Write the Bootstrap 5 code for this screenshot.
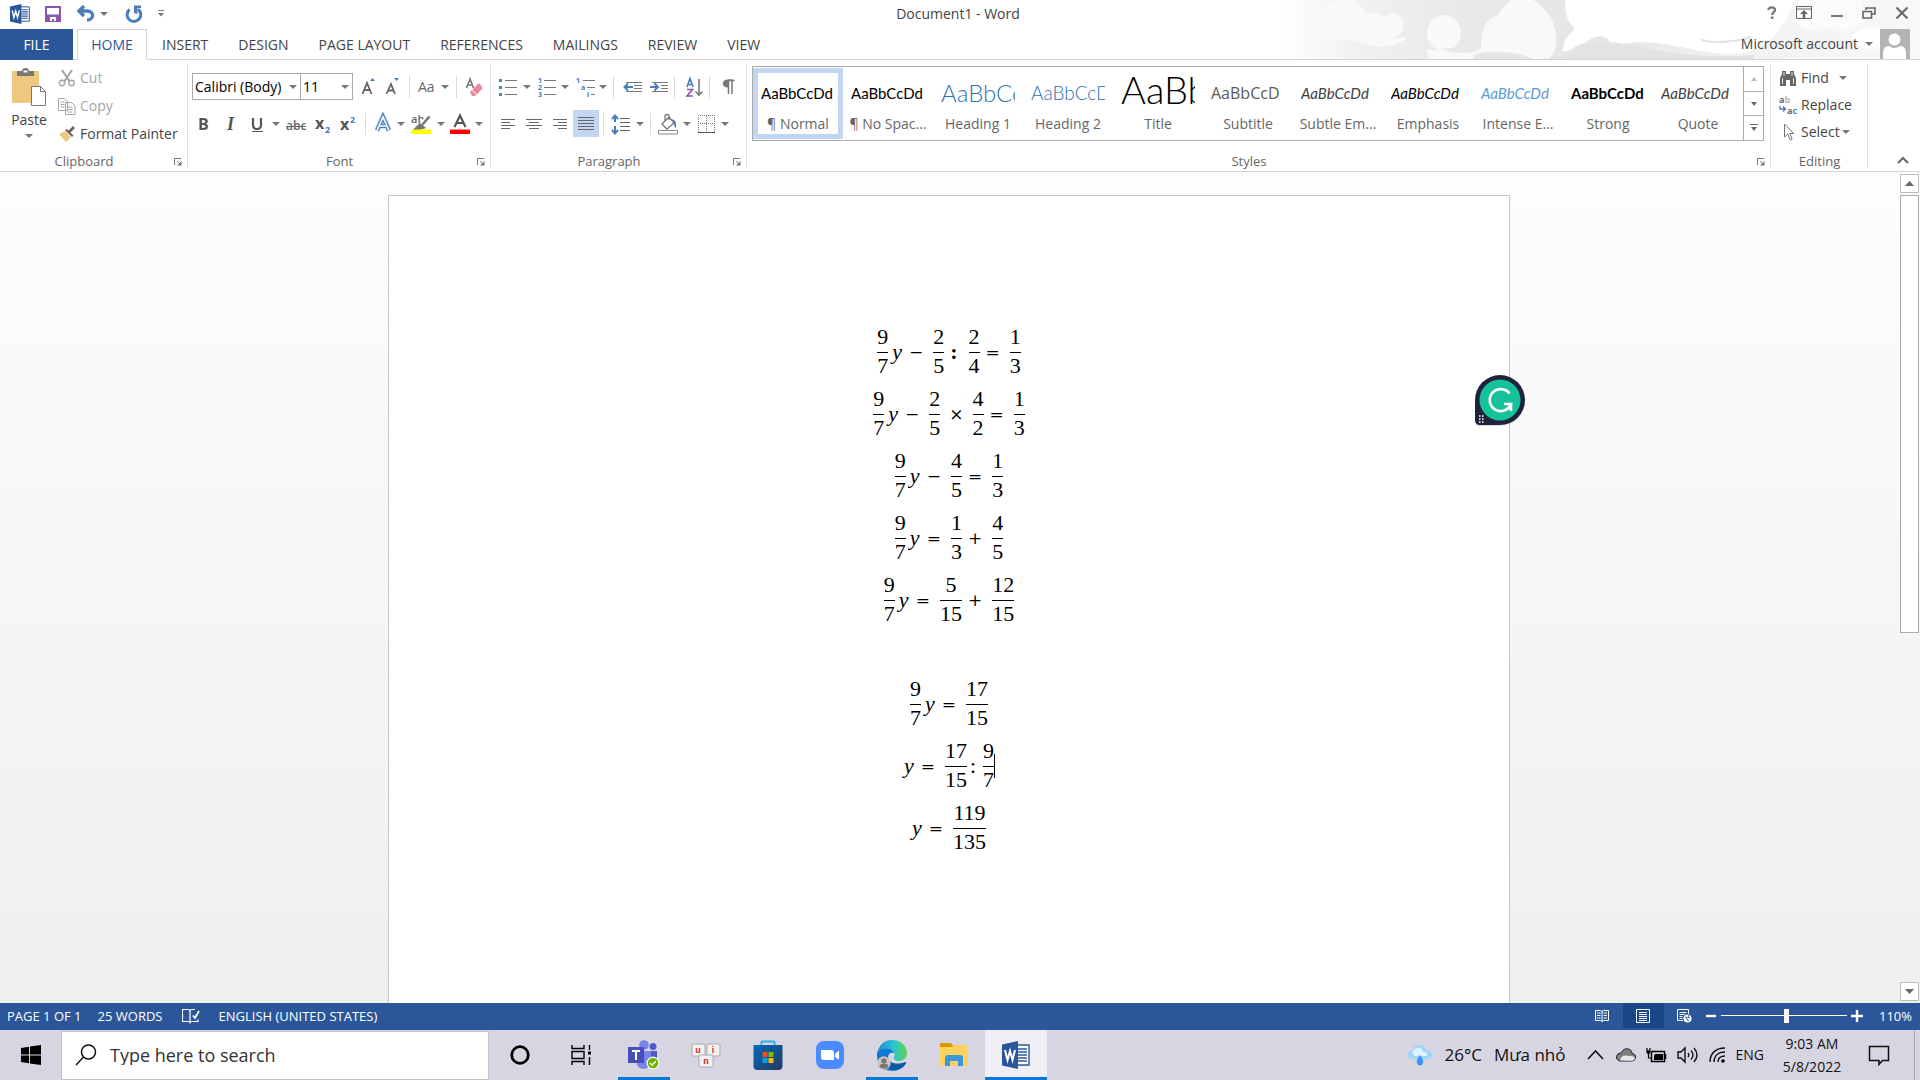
<!DOCTYPE html>
<html lang="en">
<head>
<meta charset="utf-8">
<meta name="viewport" content="width=device-width, initial-scale=1">
<title>Document1 - Word</title>
<link href="https://cdn.jsdelivr.net/npm/bootstrap@5.3.0/dist/css/bootstrap.min.css" rel="stylesheet">
<style>
:root{--word:#2b579a;--line:#d4d4d4;--ink:#444;--sel:#c2d5f2;--blue:#4a7ebb}
body{font-family:"Open Sans","Noto Sans",sans-serif;font-size:14px;line-height:20px;color:var(--ink);background:#fff;min-width:1280px}
svg{display:block;flex:none}
button{font:inherit;color:inherit;background:none;border:0;padding:0}
.caret{width:12px;flex:none;display:flex;justify-content:center}
.caret::before{content:"";border:4px solid transparent;border-top-color:#777;border-bottom:0}
/* title and tabs */
.app-head{height:60px;border-bottom:1px solid var(--line)}
.sky{right:0;top:0;width:640px;height:59px}
.quick{height:27px;padding-left:10px}
.quick .gapa{width:15px}
.doc-title{left:0;right:4px;top:4px;text-align:center}
.win-btns{height:26px;gap:18px;padding-right:10px}
.rtabs{height:31px;margin-bottom:-1px}
.rtab{height:31px;padding:0 14px;color:var(--ink);text-decoration:none;display:flex;align-items:center;border:1px solid transparent}
.rtab.file-tab{background:var(--word);color:#fff;width:73px;justify-content:center;margin-right:4px}
.rtab.on{background:#fff;color:var(--word);border-color:var(--line);border-bottom-color:#fff;width:70px;justify-content:center;padding:0}
.account{height:30px;padding-right:10px;gap:5px}
/* ribbon */
.ribbon{height:112px;border-bottom:1px solid var(--line)}
.rgroup{position:relative;flex:none}
.rgroup::after{content:"";position:absolute;right:0;top:4px;bottom:4px;width:1px;background:#e0e0e0}
.rgroup>.gname{position:absolute;left:0;right:0;bottom:0;height:20px;font-size:13px;line-height:20px;text-align:center;color:#666}
.launch{position:absolute;right:6px;bottom:5px}
.g-clip{width:188px}.g-clip .gname{right:20px}
.g-font{width:303px;padding:13px 0 0 4px}.g-font .gname{right:100px;left:100px}
.g-para{width:256px;padding:13px 0 0 4px}.g-para .gname,.g-styles .gname{right:20px}
.g-styles{min-width:0}
.g-edit{width:97px}
.g-end{width:55px}
.trow{height:27px;margin-bottom:10px}
.tbtn{display:flex;align-items:center;height:27px}
.tbtn.on{background:var(--sel)}
.tsep{width:1px;height:22px;background:#dcdcdc;margin:0 4px;flex:none}
.g-font .tsep{margin:0 5px}
.combo{position:relative;height:27px;border:1px solid #ababab;display:flex;align-items:center;background:#fff}
.combo select{appearance:none;border:0;background:none;padding:0 13px 0 2px;width:100%;color:#000;font-size:14px;line-height:20px;outline:0}
.combo .caret{position:absolute;right:1px}
.combo.face{width:109px}.combo.size{width:53px;margin:0 3px 0 -1px}
.paste{width:58px;padding-top:8px}
.cmd{height:28px;gap:4px}
.g-edit .cmd{height:27px}
.off{color:#a6a6a6}
.gallery{margin:6px 7px 0 5px;height:75px;border:1px solid #ababab}
.stitem{width:90px;height:71px;margin-top:1px;border:5px solid transparent;text-align:center;flex:none;overflow:hidden;padding:3px}
.stitem.on{border-color:var(--sel)}
.samp{display:block;height:30px;line-height:34px;overflow:hidden;white-space:nowrap;text-align:left;font-family:Lato,sans-serif;font-size:15px;color:#000}
.slab{display:block;color:#666;white-space:nowrap;margin:9px -6px 0;line-height:18px}
.h1s{font-weight:300;font-size:24px;color:#2e74b5}
.h2s{font-weight:300;font-size:19px;color:#2e74b5}
.tis{font-weight:300;font-size:38px;line-height:26px}
.sus{font-family:"Open Sans",sans-serif;font-size:16px;color:#5a5a5a}
.grey{color:#404040}
.azure{color:#5b9bd5}
.scrollcol{width:20px;border-left:1px solid #ababab}
.scrollcol button{flex:1;display:flex;align-items:center;justify-content:center}
.scrollcol button+button{border-top:1px solid #ababab}
/* document */
.canvas{background:linear-gradient(#fdfdfd,#efefef)}
.sheet{width:1122px;margin:23px 388px 0;border:1px solid #c6c6c6;border-bottom:0;background:#fff;padding-top:125px;flex:none}
.eq{height:62px;display:flex;align-items:center;justify-content:center;font-family:"Liberation Serif",serif;font-size:22px;line-height:28px;color:#000}
.eq.after{margin-top:42px}
.frac{display:flex;flex-direction:column;text-align:center;position:relative}
.frac>span:not(.cursor){line-height:25px;padding-bottom:3px}
.frac>span:first-child{border-bottom:1px solid #000}
.eq i{margin:0 1px 0 4px}
.eq b{margin:0 11px 0 6px}
.op,.times{font-family:"DejaVu Serif",serif;font-size:17px;margin:0 10px 0 6px}
.times{margin:0 9px}
.rat{margin:0 7px 0 3px}
.cursor{position:absolute;right:-1px;top:16px;height:24px;width:1px;background:#000}
.vscroll{width:20px;padding:2px 1px 2px 0}
.vscroll .sb{height:19px;border:1px solid #bcbcbc;background:#fff;display:flex;align-items:center;justify-content:center}
.vscroll .thumb{height:438px;border:1px solid #ababab;background:#fff;margin-top:2px}
.grammar{left:1470px;top:198px}
/* status */
.status{height:27px;background:var(--word);color:#fff;font-size:13px;line-height:18px;padding:0 8px 2px 7px}
.proof{margin:0 19px}
.viewbtn{width:41px;height:25px;display:flex;align-items:center;justify-content:center}
.viewbtn.on{background:#19478a}
.zoomer{appearance:none;width:126px;height:16px;background:linear-gradient(#fff,#fff) center/100% 1px no-repeat;margin:0 4px}
.zoomer::-webkit-slider-thumb{appearance:none;width:5px;height:14px;background:#fff}
/* taskbar */
.taskbar{height:50px;background:#d6d5e1;color:#111}
.start{width:61px;height:50px;display:flex;align-items:center;justify-content:center}
.find{width:428px;height:49px;background:#fff;border:1px solid #c4c4c8;padding-left:13px;gap:13px}
.find input{border:0;outline:0;font-size:18px;color:#333;background:none;width:300px;padding:0}
.find input::placeholder{color:#333;opacity:1}
.app{width:62px;height:50px;display:flex;align-items:center;justify-content:center;position:relative}
.app.run::after{content:"";position:absolute;left:5px;right:5px;bottom:0;height:3px;background:#0a78d7}
.app.now{background:#efeef4}.app.now::after{left:0;right:0}
.tray{gap:10px}
.weather{font-size:17px;gap:12px}
.clock{line-height:23px;text-align:center;width:60px}
.peek{width:6px;height:50px;border-left:1px solid #a9a9b2;margin-left:14px}
</style>
<script src="https://cdn.jsdelivr.net/npm/bootstrap@5.3.0/dist/js/bootstrap.bundle.min.js"></script>
</head>
<body class="d-flex flex-column vh-100 overflow-hidden">
<svg width="0" height="0" class="position-absolute" aria-hidden="true">
<defs>
<symbol id="word" viewBox="0 0 28 28"><path d="M14 4h13v20H14z" fill="#fff" stroke="#2b579a" stroke-width="1.4"/><path d="M16 8h9M16 11h9M16 14h9M16 17h9M16 20h9" stroke="#2b579a" stroke-width="1.5"/><path d="M0 3.500 16 0v28L0 24.500z" fill="#2b579a"/><path d="M3 9l2.500 10L8 10l2.500 9L13 9" fill="none" stroke="#fff" stroke-width="2"/></symbol>
<symbol id="launcher" viewBox="0 0 8 8"><path d="M.5 7V.5H7M3 3l3 3" fill="none" stroke="#777"/><path d="M7.500 3v4.500H3z" fill="#777"/></symbol>
</defs>
</svg>

<header class="app-head position-relative flex-shrink-0">
  <svg class="sky position-absolute" viewBox="0 0 640 59" preserveAspectRatio="none" aria-hidden="true">
    <defs><linearGradient id="fade"><stop offset="0" stop-color="#fff"/><stop offset=".12" stop-color="#f1f1f1"/><stop offset=".3" stop-color="#e8e8e8"/><stop offset=".5" stop-color="#e6e6e6"/><stop offset=".72" stop-color="#f2f2f2"/><stop offset="1" stop-color="#f8f8f8"/></linearGradient></defs>
    <path d="M0 0h640v59H0z" fill="url(#fade)"/>
    <g transform="translate(-42 0)"><g fill="#f9f9f9"><path d="M82 40c-7-20 5-41 23-41 15 0 20 9 23 16 7-4 14-2 17 3 8-8 22-5 20 8 0 8-7 12-12 12 8 1 14-2 16 0-9 8-27 11-43 6-16-6-28-5-44-4z"/><ellipse cx="206" cy="33" rx="17" ry="18"/><path d="M188 49c20 2 40 8 55 0 0-19 5-32 16-33 15-25 31-25 48-6 16 18 14 44 2 49H190z"/></g>
    <path d="M201 48q15 5 30 1M236 55q12-5 24-3 20 0 36 7h-60z" fill="#e6e6e6"/></g>
    <path d="M285 0h230c-10 25-20 37-32 45q-20 14-68 5-52-13-82-4c-8-15-20-10-28-3-10 5-20 10-22 8 0-12 6-16 12-22-10-11-9-15-10-29z" fill="#fff"/>
    <path d="M287 59c3-24 48-18 74-12q52 12 113 8v4z" fill="#e3e3e3"/>
    <path d="M421 40q22 5 50-3" fill="none" stroke="#e2e2e2" stroke-width="2"/>
    <path d="M515 0h65c10 18-1 30-17 31-10-2-19-6-26-1-24 2-24-14-22-30z" fill="#fbfbfb"/>
    <ellipse cx="592" cy="38" rx="19" ry="11" fill="#fff"/>
  </svg>
  <div class="doc-title position-absolute">Document1 - Word</div>
  <div class="d-flex justify-content-between position-relative">
    <div class="quick d-flex align-items-center">
      <svg width="20" height="20"><use href="#word"/></svg><span class="gapa"></span>
      <button aria-label="Save"><svg width="16" height="16"><path d="M1 1h14v14H1z" fill="#fff" stroke="#8a57ad" stroke-width="2"/><path d="M2 8.500h12V15H2z" fill="#8a57ad"/><path d="M5 11h6v4H9v-2H7v2H5z" fill="#fff"/></svg></button><span class="gapa"></span>
      <button class="d-flex align-items-center" aria-label="Undo"><svg width="22" height="18"><path d="M3 6h8c8 0 7 9 0 9" fill="none" stroke="#4a7ebb" stroke-width="3.400"/><path d="M8 1 3 6l5 5" fill="none" stroke="#4a7ebb" stroke-width="3.400"/></svg><span class="caret"></span></button><span class="gapa"></span>
      <button aria-label="Repeat"><svg width="18" height="18"><path d="M4.500 4.500A6.800 6.800 0 1 0 13 4.200" fill="none" stroke="#4a7ebb" stroke-width="3"/><path d="M9 .5h7V3h-3.500v6L9 8z" fill="#4a7ebb"/></svg></button><span class="gapa"></span>
      <button aria-label="Customize"><svg width="6" height="8"><path d="M0 .5h6" stroke="#777"/><path d="M0 3h6L3 6.500z" fill="#777"/></svg></button>
    </div>
    <div class="win-btns d-flex align-items-center">
      <button aria-label="Help"><svg width="12" height="16"><path d="M2.500 5C2.500 1 9.500 2 9 5 9 7 6.300 7 6.200 10M6.200 11.500v2.500" fill="none" stroke="#777" stroke-width="2.400"/></svg></button>
      <button aria-label="Ribbon display"><svg width="16" height="14"><path d="M.5.500h15v12H.5zM1 3h14" fill="none" stroke="#666"/><path d="M8 4l4 4H9.200v4H6.800V8H4z" fill="#666"/></svg></button>
      <button aria-label="Minimize"><svg width="14" height="14"><path d="M1 10h12" stroke="#777" stroke-width="2"/></svg></button>
      <button aria-label="Restore"><svg width="14" height="14"><path d="M4 4V2h9v6h-3" fill="none" stroke="#666" stroke-width="1.600"/><path d="M1 5.500h8.500v6.500H1z" fill="none" stroke="#666" stroke-width="1.600"/></svg></button>
      <button aria-label="Close"><svg width="16" height="14"><path d="M2.500 1.500l11 11M13.500 1.500l-11 11" stroke="#666" stroke-width="2"/></svg></button>
    </div>
  </div>
  <div class="d-flex justify-content-between position-absolute bottom-0 start-0 end-0">
    <nav class="rtabs d-flex">
      <a class="rtab file-tab" href="#">FILE</a><a class="rtab on" href="#">HOME</a><a class="rtab" href="#">INSERT</a><a class="rtab" href="#">DESIGN</a><a class="rtab" href="#">PAGE LAYOUT</a><a class="rtab" href="#">REFERENCES</a><a class="rtab" href="#">MAILINGS</a><a class="rtab" href="#">REVIEW</a><a class="rtab" href="#">VIEW</a>
    </nav>
    <button class="account d-flex align-items-center">Microsoft account <span class="caret"></span><svg width="30" height="30"><path d="M0 0h30v30H0z" fill="#b3b3b3"/><circle cx="14.500" cy="10.500" r="6" fill="#fff"/><path d="M3 30V24q0-7 6-7 5 4 11 0 6 0 6 7v6z" fill="#fff"/></svg></button>
  </div>
</header>

<section class="ribbon d-flex flex-shrink-0">
  <div class="rgroup g-clip d-flex">
    <button class="paste d-flex flex-column align-items-center"><svg width="34" height="38"><path d="M0 3h27v32H0z" fill="#edc87e"/><path d="M5 8V3h5q0-3 3.500-3T17 3h5v5z" fill="#777"/><path d="M11.500 2.500h4v2h-4z" fill="#fff"/><path d="M19.500 18.500h9l5 5v14h-14z" fill="#fff" stroke="#777"/><path d="M28.500 18.500v5h5" fill="none" stroke="#777"/></svg><span class="mt-1">Paste</span><span class="caret mt-1"></span></button>
    <div class="pt-1">
      <button class="cmd d-flex align-items-center off"><svg width="18" height="18"><path d="M4 1l8 12M14 1L6 13" stroke="#a6a6a6" stroke-width="2.200"/><circle cx="4" cy="14" r="2.700" fill="#fff" stroke="#a6a6a6" stroke-width="1.400"/><circle cx="13.500" cy="14" r="2.700" fill="#fff" stroke="#a6a6a6" stroke-width="1.400"/></svg>Cut</button>
      <button class="cmd d-flex align-items-center off"><svg width="18" height="18"><path d="M.5 1.500h6l3 3v9h-9zM7.500 5.500h6l3.500 3.500v8.500H7.500z" fill="#fff" stroke="#a6a6a6"/><path d="M2.500 5h4M2.500 7.500h4M2.500 10h4M9.500 10h5M9.500 12.500h5M9.500 15h5" stroke="#a6a6a6"/></svg>Copy</button>
      <button class="cmd d-flex align-items-center"><svg width="18" height="18"><path d="M1 9l6-3 6 6-5 5z" fill="#edc87e"/><path d="M7 5l7 7 1.500-1.500-3-3L17 3l-2-2-4.500 4.500L9 4z" fill="#666"/></svg>Format Painter</button>
    </div>
    <div class="gname">Clipboard</div><svg class="launch" width="8" height="8"><use href="#launcher"/></svg>
  </div>

  <div class="rgroup g-font">
    <div class="trow d-flex align-items-center">
      <label class="combo face"><select aria-label="Font"><option>Calibri (Body)</option></select><span class="caret"></span></label>
      <label class="combo size"><select aria-label="Font size"><option>11</option></select><span class="caret"></span></label>
      <button class="tbtn" aria-label="Grow font"><svg width="24" height="24"><path d="M6.500 19 11 8l4.500 11M8 15h6" fill="none" stroke="#666" stroke-width="1.800"/><path d="M14 6l2.500-3L19 6z" fill="#4a7ebb"/></svg></button>
      <button class="tbtn" aria-label="Shrink font"><svg width="24" height="24"><path d="M6.500 19 11 9l4 10M8 15.500h6" fill="none" stroke="#666" stroke-width="1.800"/><path d="M14 3h5l-2.500 3z" fill="#4a7ebb"/></svg></button>
      <span class="tsep"></span>
      <button class="tbtn" aria-label="Change case"><svg width="24" height="24"><text x="3" y="17" font-size="14" fill="#666">Aa</text></svg><span class="caret"></span></button>
      <span class="tsep"></span>
      <button class="tbtn" aria-label="Clear formatting"><svg width="24" height="24"><path d="M4.500 13 8 4l3.500 9M6 10h4.500" fill="none" stroke="#777" stroke-width="1.600"/><path d="M8 17l8-8q1-1 2 0l2 3q1 1 0 2l-7 7h-3z" fill="#e88a9a"/><path d="M9.500 14.500l5 5" stroke="#fff"/></svg></button>
    </div>
    <div class="trow d-flex align-items-center">
      <button class="tbtn" aria-label="Bold"><svg width="26" height="24"><text x="6" y="18" font-size="16" font-weight="700" fill="#555">B</text></svg></button>
      <button class="tbtn" aria-label="Italic"><svg width="26" height="24"><text x="9" y="18" font-size="18" font-weight="700" font-style="italic" font-family="Liberation Serif" fill="#555">I</text></svg></button>
      <button class="tbtn" aria-label="Underline"><svg width="26" height="24"><path d="M9 6v7q0 4 4 4t4-4V6" fill="none" stroke="#555" stroke-width="2.200"/><path d="M8 19.500h11" stroke="#555"/></svg><span class="caret"></span></button>
      <button class="tbtn" aria-label="Strikethrough"><svg width="28" height="24"><text x="4" y="18" font-size="12" font-weight="600" fill="#666">abc</text><path d="M4 14.500h20" stroke="#666"/></svg></button>
      <button class="tbtn" aria-label="Subscript"><svg width="26" height="24"><text x="5" y="17" font-size="16" font-weight="700" fill="#555">x</text><text x="15" y="21" font-size="9" font-weight="700" fill="#4a7ebb">2</text></svg></button>
      <button class="tbtn" aria-label="Superscript"><svg width="24" height="24"><text x="4" y="18" font-size="16" font-weight="700" fill="#555">x</text><text x="14" y="11" font-size="9" font-weight="700" fill="#4a7ebb">2</text></svg></button>
      <span class="tsep"></span>
      <button class="tbtn" aria-label="Text effects"><svg width="24" height="24"><path d="M6 18.500 12 5l6 13.500M8.500 14h7" fill="none" stroke="#c7dcf5" stroke-width="6"/><path d="M6 18.500 12 5l6 13.500M8.500 14h7" fill="none" stroke="#4a7ebb" stroke-width="4"/><path d="M6 18.500 12 5l6 13.500M8.500 14h7" fill="none" stroke="#fff" stroke-width="1.600"/></svg><span class="caret"></span></button>
      <button class="tbtn" aria-label="Highlight"><svg width="28" height="24"><text x="4" y="11" font-size="11" font-weight="600" fill="#666">ab</text><path d="M23 4l-8 8-3 5" fill="none" stroke="#fff" stroke-width="5"/><path d="M22.500 4.500l-7 8M13 12.500l3.500 3-4 1.500H8.500z" fill="#777" stroke="#777" stroke-width="2.600"/><path d="M4 17.500h20v4.500H4z" fill="#ff0"/></svg><span class="caret"></span></button>
      <button class="tbtn" aria-label="Font colour"><svg width="26" height="24"><path d="M7.500 15 13 3.500 18.500 15M10 11h6" fill="none" stroke="#555" stroke-width="2.200"/><path d="M3 17.500h20v4.500H3z" fill="red"/></svg><span class="caret"></span></button>
    </div>
    <div class="gname">Font</div><svg class="launch" width="8" height="8"><use href="#launcher"/></svg>
  </div>

  <div class="rgroup g-para">
    <div class="trow d-flex align-items-center">
      <button class="tbtn" aria-label="Bullets"><svg width="26" height="24"><path d="M10 5.500h12M10 12.500h12M10 19.500h12" stroke="#777"/><path d="M4 4h3v3H4zM4 11h3v3H4zM4 18h3v3H4z" fill="#4a7ebb"/></svg><span class="caret"></span></button>
      <button class="tbtn" aria-label="Numbering"><svg width="26" height="24"><path d="M11 5.500h12M11 12.500h12M11 19.500h12" stroke="#777"/><g font-size="7" font-weight="700" fill="#4a7ebb"><text x="5" y="8">1</text><text x="5" y="15">2</text><text x="5" y="22">3</text></g></svg><span class="caret"></span></button>
      <button class="tbtn" aria-label="Multilevel list"><svg width="26" height="24"><path d="M12 5.500h12M16 12.500h8M20 19.500h4" stroke="#777"/><g font-size="7" font-weight="700" fill="#4a7ebb"><text x="5" y="8">1</text><text x="10" y="15">a</text><text x="16" y="22">i</text></g></svg><span class="caret"></span></button>
      <span class="tsep"></span>
      <button class="tbtn" aria-label="Decrease indent"><svg width="26" height="24"><path d="M8 7.500h16M16 10.500h8M16 13.500h8M8 16.500h16" stroke="#777"/><path d="M6 12h9M10 8.500 6.500 12 10 15.500" fill="none" stroke="#4a7ebb" stroke-width="2"/></svg></button>
      <button class="tbtn" aria-label="Increase indent"><svg width="26" height="24"><path d="M8 7.500h16M17 10.500h7M17 13.500h7M8 16.500h16" stroke="#777"/><path d="M6 12h8M10.500 8.500 14 12 10.500 15.500" fill="none" stroke="#4a7ebb" stroke-width="2"/></svg></button>
      <span class="tsep"></span>
      <button class="tbtn" aria-label="Sort"><svg width="26" height="24"><path d="M8 12l3-8.500 3 8.500M9 9.500h4" fill="none" stroke="#4a7ebb" stroke-width="1.600"/><path d="M8 14.500h5.500L8 21h6" fill="none" stroke="#8a57ad" stroke-width="1.600"/><path d="M20 4v16M16.500 16.500 20 20l3.500-3.500" fill="none" stroke="#777" stroke-width="1.600"/></svg></button>
      <span class="tsep"></span>
      <button class="tbtn" aria-label="Show marks"><svg width="26" height="24"><path d="M14 5h5M20.500 5.500H14M14.500 5v14M18 5v14" fill="none" stroke="#777" stroke-width="1.500"/><path d="M14 4.500c-7 0-7 8 0 8z" fill="#777"/></svg></button>
    </div>
    <div class="trow d-flex align-items-center">
      <button class="tbtn" aria-label="Align left"><svg width="26" height="24"><path d="M6 7.500h14M6 10.500h9M6 13.500h14M6 16.500h9" stroke="#666"/></svg></button>
      <button class="tbtn" aria-label="Center"><svg width="26" height="24"><path d="M5 7.500h16M8 10.500h10M5 13.500h16M8 16.500h10" stroke="#666"/></svg></button>
      <button class="tbtn" aria-label="Align right"><svg width="26" height="24"><path d="M6 7.500h14M11 10.500h9M6 13.500h14M11 16.500h9" stroke="#666"/></svg></button>
      <button class="tbtn on" aria-label="Justify"><svg width="26" height="24"><path d="M5 5.500h16M5 8.500h16M5 11.500h16M5 14.500h16M5 17.500h16" stroke="#666"/></svg></button>
      <span class="tsep"></span>
      <button class="tbtn" aria-label="Line spacing"><svg width="26" height="24"><path d="M12 6.500h10M12 10.500h10M12 14.500h10M12 18.500h10" stroke="#666"/><path d="M7 4v6M7 14v7M4 7l3-3.500L10 7M4 18l3 3.500 3-3.500" fill="none" stroke="#4a7ebb" stroke-width="2"/></svg><span class="caret"></span></button>
      <span class="tsep"></span>
      <button class="tbtn" aria-label="Shading"><svg width="26" height="24"><path d="M7 12l7-7 5 6-7 6zM10 9V3.500q2-2 4 0V8" fill="#fff" stroke="#777" stroke-width="1.300"/><path d="M17 7q5 1 4 9-2-1-2-5z" fill="#4a7ebb"/><path d="M3.500 18.500h19v3.500h-19z" fill="#fff" stroke="#888"/></svg><span class="caret"></span></button>
      <button class="tbtn" aria-label="Borders"><svg width="26" height="24"><path d="M5.500 20V3.500h16V20M5 11.500h17M13.500 4v16" fill="none" stroke="#777" stroke-dasharray="1 1"/><path d="M5 20.500h17" stroke="#555"/></svg><span class="caret"></span></button>
    </div>
    <div class="gname">Paragraph</div><svg class="launch" width="8" height="8"><use href="#launcher"/></svg>
  </div>

  <div class="rgroup g-styles flex-grow-1">
    <div class="gallery d-flex">
      <div class="d-flex flex-grow-1 overflow-hidden">
        <button class="stitem on"><span class="samp">AaBbCcDd</span><span class="slab">¶ Normal</span></button>
        <button class="stitem"><span class="samp">AaBbCcDd</span><span class="slab">¶ No Spac...</span></button>
        <button class="stitem"><span class="samp h1s">AaBbCc</span><span class="slab">Heading 1</span></button>
        <button class="stitem"><span class="samp h2s">AaBbCcD</span><span class="slab">Heading 2</span></button>
        <button class="stitem"><span class="samp tis">AaBb</span><span class="slab">Title</span></button>
        <button class="stitem"><span class="samp sus">AaBbCcD</span><span class="slab">Subtitle</span></button>
        <button class="stitem"><span class="samp fst-italic grey">AaBbCcDd</span><span class="slab">Subtle Em...</span></button>
        <button class="stitem"><span class="samp fst-italic">AaBbCcDd</span><span class="slab">Emphasis</span></button>
        <button class="stitem"><span class="samp fst-italic azure">AaBbCcDd</span><span class="slab">Intense E...</span></button>
        <button class="stitem"><span class="samp fw-bold">AaBbCcDd</span><span class="slab">Strong</span></button>
        <button class="stitem"><span class="samp fst-italic grey">AaBbCcDd</span><span class="slab">Quote</span></button>
      </div>
      <div class="scrollcol d-flex flex-column">
        <button aria-label="Up"><svg width="6" height="4"><path d="M0 4h6L3 0z" fill="#bbb"/></svg></button>
        <button aria-label="Down"><svg width="6" height="4"><path d="M0 0h6L3 4z" fill="#666"/></svg></button>
        <button aria-label="More"><svg width="8" height="8"><path d="M0 .5h8" stroke="#666"/><path d="M1 3h6L4 7z" fill="#666"/></svg></button>
      </div>
    </div>
    <div class="gname">Styles</div><svg class="launch" width="8" height="8"><use href="#launcher"/></svg>
  </div>

  <div class="rgroup g-edit pt-1 ps-2">
    <button class="cmd d-flex align-items-center"><svg width="18" height="18"><path d="M3 2h4v3h4V2h4v3l2 4v8h-6v-6H7v6H1V9l2-4z" fill="#666"/><path d="M5 3v4M13 3v4M3.500 9v6M14.500 9v6" stroke="#fff" stroke-width=".8"/></svg>Find<span class="caret ms-1"></span></button>
    <button class="cmd d-flex align-items-center"><svg width="18" height="20"><text x="0" y="8" font-size="9" font-weight="700" fill="#666">a<tspan fill="#b5b5b5">b</tspan></text><text x="8" y="19" font-size="9" font-weight="700" fill="#666">a<tspan fill="#4a7ebb">c</tspan></text><path d="M1 11v3h5M4 11.500 6.500 14 4 16.500" fill="none" stroke="#4a7ebb" stroke-width="1.400"/></svg>Replace</button>
    <button class="cmd d-flex align-items-center gap-0"><svg width="22" height="18"><path d="M5.500 1v13l3.200-3 2.500 6 2-1-2.500-5.500h4z" fill="#fff" stroke="#777"/></svg>Select<span class="caret"></span></button>
    <div class="gname">Editing</div>
  </div>
  <div class="g-end d-flex align-items-end justify-content-end px-2 pb-1"><button aria-label="Collapse ribbon"><svg width="18" height="12"><path d="M4 8l5-5 5 5" fill="none" stroke="#666" stroke-width="2"/></svg></button></div>
</section>

<main class="canvas position-relative d-flex flex-grow-1 overflow-hidden justify-content-between">
  <article class="sheet">
    <div class="eq"><span class="frac"><span>9</span><span>7</span></span><i>y</i><span class="op">−</span><span class="frac"><span>2</span><span>5</span></span><b>:</b><span class="frac"><span>2</span><span>4</span></span><span class="op">=</span><span class="frac"><span>1</span><span>3</span></span></div>
    <div class="eq"><span class="frac"><span>9</span><span>7</span></span><i>y</i><span class="op">−</span><span class="frac"><span>2</span><span>5</span></span><span class="times">×</span><span class="frac"><span>4</span><span>2</span></span><span class="op">=</span><span class="frac"><span>1</span><span>3</span></span></div>
    <div class="eq"><span class="frac"><span>9</span><span>7</span></span><i>y</i><span class="op">−</span><span class="frac"><span>4</span><span>5</span></span><span class="op">=</span><span class="frac"><span>1</span><span>3</span></span></div>
    <div class="eq"><span class="frac"><span>9</span><span>7</span></span><i>y</i><span class="op">=</span><span class="frac"><span>1</span><span>3</span></span><span class="op">+</span><span class="frac"><span>4</span><span>5</span></span></div>
    <div class="eq"><span class="frac"><span>9</span><span>7</span></span><i>y</i><span class="op">=</span><span class="frac"><span>5</span><span>15</span></span><span class="op">+</span><span class="frac"><span>12</span><span>15</span></span></div>
    <div class="eq after"><span class="frac"><span>9</span><span>7</span></span><i>y</i><span class="op">=</span><span class="frac"><span>17</span><span>15</span></span></div>
    <div class="eq"><i class="ms-0">y</i><span class="op">=</span><span class="frac"><span>17</span><span>15</span></span><span class="rat">:</span><span class="frac"><span>9</span><span>7</span><span class="cursor"></span></span></div>
    <div class="eq"><i class="ms-0">y</i><span class="op">=</span><span class="frac"><span>119</span><span>135</span></span></div>
  </article>
  <svg class="grammar position-absolute" width="62" height="62"><path d="M5 31a25 25 0 1 1 25 25H10q-5 0-5-5z" fill="#000" opacity=".12"/><path d="M5 30a25 25 0 1 1 25 25H10q-5 0-5-5z" fill="#1f243c"/><circle cx="30" cy="30" r="20.500" fill="#15c39a"/><path d="M39.500 23.500A11 11 0 1 0 41 34H34M41 41v-7" fill="none" stroke="#fff" stroke-width="2.600"/><path d="M36 33h6v6z" fill="#fff"/><path d="M9 46h1.500M12 46h1.500M9 49h1.500M12 49h1.500M9 52h1.500M12 52h1.500" stroke="#fff" stroke-width="1.500"/></svg>
  <div class="vscroll d-flex flex-column flex-shrink-0 position-absolute end-0 top-0 bottom-0">
    <button class="sb" aria-label="Scroll up"><svg width="9" height="5"><path d="M0 5h9L4.500 0z" fill="#666"/></svg></button>
    <div class="thumb"></div>
    <button class="sb mt-auto" aria-label="Scroll down"><svg width="9" height="5"><path d="M0 0h9L4.500 5z" fill="#666"/></svg></button>
  </div>
</main>

<footer class="flex-shrink-0">
  <div class="status d-flex align-items-center">
    <span>PAGE 1 OF 1</span><span class="ms-3">25 WORDS</span>
    <svg width="18" height="16" class="proof"><path d="M8 13.500H.5V1.500H6q2 0 2 2v12q0-2 2-2h6v-2M8 3.500q0-2 2-2h3" fill="none" stroke="#fff" stroke-width="1.200"/><path d="M11 7.500l2 2.500 4-7" fill="none" stroke="#fff" stroke-width="1.800"/></svg>
    <span>ENGLISH (UNITED STATES)</span>
    <button class="viewbtn ms-auto" aria-label="Read mode"><svg width="14" height="14"><path d="M.5 1.500h5l1.500 1 1.500-1h5v10h-5l-1.500 1-1.500-1h-5zM7 2v11M2 4h3.500M2 6.500h3.500M2 9h3.500M8.500 4H12M8.500 6.500H12M8.500 9H12" fill="none" stroke="#fff"/></svg></button>
    <button class="viewbtn on" aria-label="Print layout"><svg width="14" height="14"><path d="M.5.500h13v13H.5zM3 3.500h8M3 5.500h8M3 7.500h8M3 9.500h8M3 11.500h8" fill="none" stroke="#fff"/></svg></button>
    <button class="viewbtn" aria-label="Web layout"><svg width="15" height="14"><path d="M6 11.500H.5V.5h11V5M2.500 3.500h7M2.500 5.500h5M2.500 7.500h3M2.500 9.500h3" fill="none" stroke="#fff"/><circle cx="10.500" cy="9.500" r="4" fill="#fff"/><path d="M8 8l2 .5v2l2 1.500M12 6l-1 2 2 1" fill="none" stroke="#2b579a"/></svg></button>
    <svg width="12" height="14"><path d="M1 7h10" stroke="#fff" stroke-width="2.400"/></svg>
    <input class="zoomer" type="range" min="0" max="200" value="104" aria-label="Zoom">
    <svg width="12" height="14"><path d="M0 7h12M6 1v12" stroke="#fff" stroke-width="2.400"/></svg>
    <span class="ms-3">110%</span>
  </div>
  <div class="taskbar d-flex align-items-center">
    <button class="start" aria-label="Start"><svg width="20" height="20"><path d="M0 3l8-1.200V9.500H0zM9 1.600 20 0v9.500H9zM0 10.500h8v7.700L0 17zM9 10.500h11V20L9 18.400z"/></svg></button>
    <label class="find d-flex align-items-center"><svg width="22" height="22"><circle cx="13.500" cy="8" r="7" fill="none" stroke="#111" stroke-width="1.500"/><path d="M8.500 13 1 21" stroke="#111" stroke-width="1.500"/></svg><input type="text" placeholder="Type here to search" aria-label="Search"></label>
    <button class="app" aria-label="Cortana"><svg width="22" height="22"><circle cx="11" cy="11" r="8.300" fill="none" stroke="#000" stroke-width="2.800"/></svg></button>
    <button class="app" aria-label="Task view"><svg width="22" height="20"><path d="M1 0v3.500h12V0M1 20v-3.500h12V20M1 6.500h12v7H1zM18.500 0v5M18.500 12v8" fill="none" stroke="#000" stroke-width="1.400"/><path d="M17 6.500h3v3h-3z"/></svg></button>
    <button class="app run" aria-label="Teams"><svg width="32" height="30"><circle cx="16" cy="5" r="4.800" fill="#7b83eb"/><circle cx="25" cy="6.500" r="3.500" fill="#5059c9"/><path d="M20 11h9v9q0 6-6 6z" fill="#5059c9"/><path d="M9 11h14v10q-1 8-8 8-6-1-6-6z" fill="#7b83eb"/><path d="M0 7h16v16H0z" fill="#464eb8"/><path d="M4 11h8M8 11v9" stroke="#fff" stroke-width="2"/><circle cx="25" cy="23" r="6.500" fill="#fff"/><circle cx="25" cy="23" r="5.300" fill="#6bb700"/><path d="M22 23l2 2.200 4-4" fill="none" stroke="#fff" stroke-width="1.600"/></svg></button>
    <button class="app" aria-label="UniKey"><svg width="30" height="26"><g fill="#f3f1f1" stroke="#aaa"><rect x="1" y="2" width="13" height="12" rx="1"/><rect x="16" y="2" width="13" height="12" rx="1"/><rect x="8" y="13" width="14" height="12" rx="1"/></g><g font-size="9" font-weight="700" fill="#e02020" font-family="Liberation Sans" text-anchor="middle"><text x="7" y="11">u</text><text x="22" y="11">i</text><text x="15" y="22">n</text></g></svg></button>
    <button class="app" aria-label="Store"><svg width="30" height="30"><defs><linearGradient id="st" x2="1" y2="1"><stop stop-color="#0669bc"/><stop offset="1" stop-color="#243a5e"/></linearGradient></defs><path d="M8.500 7V2.500q0-1 1-1h11q1 0 1 1V7" fill="none" stroke="#28afea" stroke-width="2"/><path d="M.5 5h29v21q0 4-4 4h-21q-4 0-4-4z" fill="url(#st)"/><path d="M9.500 12h5v5h-5z" fill="#f25022"/><path d="M15.500 12h5v5h-5z" fill="#7fba00"/><path d="M9.500 18h5v5h-5z" fill="#00a4ef"/><path d="M15.500 18h5v5h-5z" fill="#ffb900"/></svg></button>
    <button class="app" aria-label="Zoom"><svg width="30" height="30"><rect x="1" y="1" width="28" height="28" rx="8" fill="#4a8cff"/><path d="M6 10h10q3 0 3 3v7H9q-3 0-3-3zM20 14l4-3.500v9L20 17z" fill="#fff"/></svg></button>
    <button class="app run" aria-label="Edge"><svg width="32" height="32"><defs><linearGradient id="eg"><stop stop-color="#1b8ad6"/><stop offset=".55" stop-color="#2bc3d2"/><stop offset="1" stop-color="#5fd84a"/></linearGradient></defs><path d="M1 16C1 8 8 8 13 9q6 2 5 5-6-1-6 5 1 8 9 9 4 0 7-1-5 5-12 5Q1 31 1 16z" fill="#0f78d0"/><path d="M1.500 14C3 5 9 1 16 1c10 0 15 7 15 13 0 5-4 8-8 8-4 0-6-2-5-4 2-3-1-7-5-8-5-1-9 1-11.500 4z" fill="url(#eg)"/><path d="M12 16c-1 7 7 11 17 7 2 0 1 2 0 3-4 5-11 6-15 4-6-4-6-10-2-14z" fill="#0c59a4"/><circle cx="8" cy="24" r="6.700" fill="#c9c7c5"/><circle cx="8" cy="22" r="2.700" fill="#7b7774"/><path d="M3.500 28q0-3 2.500-3h4q2.500 0 2.500 3-4 3.500-9 0z" fill="#7b7774"/></svg></button>
    <button class="app" aria-label="File Explorer"><svg width="30" height="26"><path d="M1 2q0-1 1-1h10l3 4H1z" fill="#d99a00"/><path d="M1 5h12l2-2h14v19q0 2-2 2H1z" fill="#ffd25e"/><path d="M6 24v-8q0-3 3-3h12q3 0 3 3v8h-5v-5h-8v5z" fill="#3a96dd"/></svg></button>
    <button class="app run now" aria-label="Word"><svg width="28" height="28"><use href="#word"/></svg></button>
    <div class="tray d-flex align-items-center ms-auto">
      <button class="weather d-flex align-items-center"><svg width="26" height="22"><path d="M6 15q-6 0-5-5 1-4 5-4 2-6 8-5 5 1 5 5 6 0 6 5 0 4-5 4z" fill="#9fd3fa"/><path d="M7 12q-4-6 3-8 5-1 6 4 5 0 4 4z" fill="#dff2ff"/><path d="M13 11q4 5 3 8-1 2.500-3 2.500T10 19q-1-3 3-8z" fill="#3a96ee"/></svg><span>26°C</span><span>Mưa nhỏ</span></button>
      <button aria-label="Hidden icons" class="ms-2"><svg width="22" height="20"><path d="M4 14l7.500-8 7.500 8" fill="none" stroke="#111" stroke-width="1.600"/></svg></button>
      <svg width="20" height="16"><path d="M4 14q-4-1-3.500-4.500Q1 6 5 6q3-6 9-3.500Q16 4 16 6.500q4 .5 3.500 4T16 14z" fill="#808080" stroke="#222"/><path d="M4 13.500q1-5 6-5l8 1q2 4-2 4.200z" fill="#e8e8e8"/></svg>
      <svg width="21" height="16"><path d="M5.500 4.500h13v10h-13zM19.500 7v5" fill="none" stroke="#000" stroke-width="1.500"/><path d="M9 7h8v6H8V9z"/><path d="M0 3h5v2q-1 2.500-2.500 2.500T0 5z" stroke="#d6d5e1" stroke-width=".5"/><path d="M1 1v2M4 1v2M2.500 7v4h3" fill="none" stroke="#000" stroke-width="1.200"/></svg>
      <svg width="22" height="18"><path d="M1 6h3l4-4v14l-4-4H1z" fill="none" stroke="#111" stroke-width="1.400"/><path d="M11 7q1.500 2 0 4M14 4.500q4 4.500 0 9M17 2q6 7 0 14" fill="none" stroke="#111" stroke-width="1.400"/></svg>
      <svg width="17" height="18"><path d="M1 16C1 7 7 2 16 2M5 16c0-6 4-10 11-10M9 16c0-4 3-6 7-6" fill="none" stroke="#111" stroke-width="1.400"/><circle cx="14" cy="15" r="1.800"/></svg>
      <span>ENG</span>
      <div class="clock ms-2">9:03 AM<br>5/8/2022</div>
      <button aria-label="Notifications" class="ms-3"><svg width="22" height="21"><path d="M1.500 1.500h19v14h-6l-3.500 4v-4H1.500z" fill="none" stroke="#111" stroke-width="1.500"/></svg></button>
      <span class="peek"></span>
    </div>
  </div>
</footer>
</body>
</html>
